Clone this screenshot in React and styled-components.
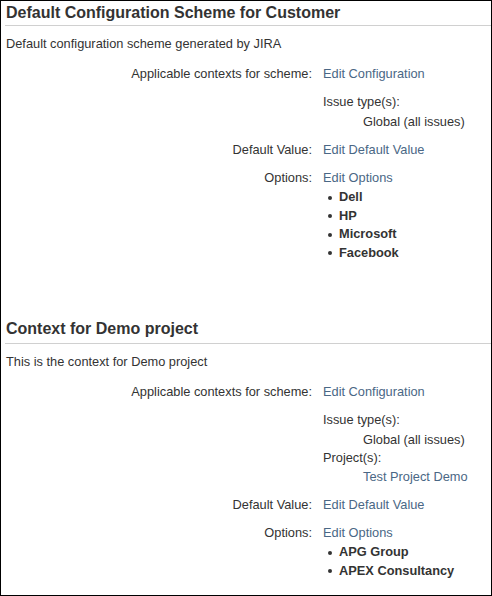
import React from 'react';
import styled, { createGlobalStyle } from 'styled-components';

const GlobalStyle = createGlobalStyle`
    html, body {
        margin: 0;
        padding: 0;
        background: #fff;
    }
    body {
        font-family: "Liberation Sans", Arial, sans-serif;
        font-size: 12.8px;
        color: #333;
    }
`;

const Frame = styled.div`
    width: 492px;
    height: 596px;
    box-sizing: border-box;
    border: 1px solid #000;
    overflow: hidden;
    background: #fff;
`;

const Section = styled.section`
    margin-top: ${props => props.gap}px;
`;

const Heading = styled.h2`
    margin: 0 0 0 4px;
    padding: 2px 0 ${props => props.padBottom}px 1px;
    font-size: 16px;
    line-height: 20px;
    font-weight: bold;
    color: #333;
    border-bottom: 1px solid #d0d0d0;
`;

const Description = styled.p`
    margin: 9px 0 0;
    padding-left: 5px;
    line-height: 18.5px;
`;

const Fields = styled.div`
    display: grid;
    grid-template-columns: 306px 1fr;
    column-gap: 11px;
    row-gap: 9.5px;
    margin-top: 11px;
    padding-left: 5px;
    line-height: 18.5px;
`;

const Label = styled.div`
    text-align: right;
`;

const Value = styled.div``;

const Link = styled.a`
    color: #4a6785;
    text-decoration: none;
`;

const SubLabel = styled.div``;

const SubValue = styled.div`
    padding-left: 40px;
    margin-top: ${props => props.gap || 0}px;
`;

const OptionList = styled.ul`
    list-style: none;
    margin: 1px 0 0;
    padding: 0;
`;

const OptionItem = styled.li`
    display: flex;
    align-items: center;
    font-weight: bold;
    color: #333;

    &::before {
        content: "";
        width: 4px;
        height: 4px;
        border-radius: 50%;
        background: #333;
        margin: 1px 7px 0 5px;
    }
`;

const schemes = [
    {
        title: 'Default Configuration Scheme for Customer',
        description: 'Default configuration scheme generated by JIRA',
        projects: null,
        options: ['Dell', 'HP', 'Microsoft', 'Facebook'],
        gap: 0,
        padBottom: 2,
    },
    {
        title: 'Context for Demo project',
        description: 'This is the context for Demo project',
        projects: ['Test Project Demo'],
        options: ['APG Group', 'APEX Consultancy'],
        gap: 55,
        padBottom: 4,
    },
];

const Scheme = ({ scheme }) => (
    <Section gap={scheme.gap}>
        <Heading padBottom={scheme.padBottom}>{scheme.title}</Heading>
        <Description>{scheme.description}</Description>
        <Fields>
            <Label>Applicable contexts for scheme:</Label>
            <Value><Link href="#">Edit Configuration</Link></Value>

            <Label></Label>
            <Value>
                <SubLabel>Issue type(s):</SubLabel>
                <SubValue gap={1.5}>Global (all issues)</SubValue>
                {scheme.projects && (
                    <>
                        <SubLabel>Project(s):</SubLabel>
                        {scheme.projects.map(p => (
                            <SubValue key={p}><Link href="#">{p}</Link></SubValue>
                        ))}
                    </>
                )}
            </Value>

            <Label>Default Value:</Label>
            <Value><Link href="#">Edit Default Value</Link></Value>

            <Label>Options:</Label>
            <Value>
                <Link href="#">Edit Options</Link>
                <OptionList>
                    {scheme.options.map(o => (
                        <OptionItem key={o}>{o}</OptionItem>
                    ))}
                </OptionList>
            </Value>
        </Fields>
    </Section>
);

export default function App() {
    return (
        <>
            <GlobalStyle />
            <Frame>
                {schemes.map(s => (
                    <Scheme key={s.title} scheme={s} />
                ))}
            </Frame>
        </>
    );
}
